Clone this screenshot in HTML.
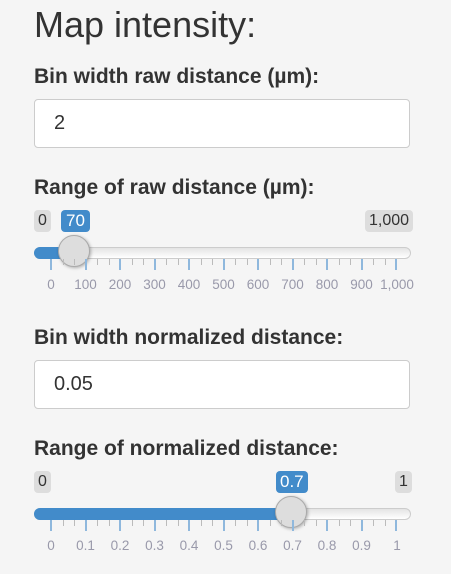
<!DOCTYPE html><html><head><style>
body{margin:0;width:451px;height:574px;background:#f5f5f5;font-family:"Liberation Sans",sans-serif;color:#333;position:relative;overflow:hidden}
h1{position:absolute;left:34px;top:4px;margin:0;font-weight:normal;font-size:36px;color:#333}
.lab{position:absolute;left:34px;font-weight:bold;font-size:21px}
.inp{position:absolute;left:34px;width:374px;height:47px;background:#fff;border:1.5px solid #ccc;border-radius:4px;font-size:20px;line-height:47px;text-indent:19px;box-sizing:content-box}
.bub{position:absolute;height:22px;line-height:22px;font-size:16px;padding:0 4px;border-radius:4px;background:#ddd;color:#333}
.bub.b{background:#428bca;color:#fff;font-size:17px}
.track{position:absolute;left:34px;width:375px;height:10px;border:1px solid #ccc;border-radius:6px;background:linear-gradient(#e4e4e4,#fff)}
.fill{position:absolute;left:34px;height:12px;background:#428bca;border-radius:6px 0 0 6px}
.h{position:absolute;width:30px;height:30px;border-radius:50%;background:#ddd;border:1.5px solid #aaa;box-shadow:1px 1px 3px rgba(0,0,0,.3)}
.t{position:absolute;width:1px;background:#bbb}
.t.m{background:#8fb8dd;width:2px}
.n{position:absolute;font-size:13.5px;color:#99a;transform:translateX(-50%)}
</style></head><body>
<h1>Map intensity:</h1>
<div class="lab" style="top:65px">Bin width raw distance (µm):</div>
<div class="inp" style="top:99px">2</div>
<div class="lab" style="top:176px">Range of raw distance (µm):</div>
<div class="bub" style="left:34px;top:210px">0</div>
<div class="bub b" style="left:61px;top:210px;padding:0 5px">70</div>
<div class="bub" style="left:365px;top:210px">1,000</div>
<div class="track" style="top:247px"></div>
<div class="fill" style="top:247px;width:42px"></div>
<div class="h" style="left:58px;top:235px"></div>
<div id="s1"></div>
<div class="lab" style="top:326px">Bin width normalized distance:</div>
<div class="inp" style="top:360px">0.05</div>
<div class="lab" style="top:437px">Range of normalized distance:</div>
<div class="bub" style="left:34px;top:471px">0</div>
<div class="bub b" style="left:276px;top:471px">0.7</div>
<div class="bub" style="left:395px;top:471px">1</div>
<div class="track" style="top:508px"></div>
<div class="fill" style="top:508px;width:258px"></div>
<div class="h" style="left:275px;top:496px"></div>
<div id="s2"></div>
<script>
function mk(id,top,labs){var h='';for(var i=0;i<=30;i++){var x=51+i*34.5/3;var maj=i%3==0;
h+='<div class="t'+(maj?' m':'')+'" style="left:'+(maj?x-1:x)+'px;top:'+top+'px;height:'+(maj?11:6)+'px"></div>';}
for(var j=0;j<=10;j++){h+='<div class="n" style="left:'+(51+j*34.5+(j==10?1:0))+'px;top:'+(top+18)+'px">'+labs[j]+'</div>';}
document.getElementById(id).innerHTML=h;}
mk('s1',259,['0','100','200','300','400','500','600','700','800','900','1,000']);
mk('s2',520,['0','0.1','0.2','0.3','0.4','0.5','0.6','0.7','0.8','0.9','1']);
</script>
</body></html>
